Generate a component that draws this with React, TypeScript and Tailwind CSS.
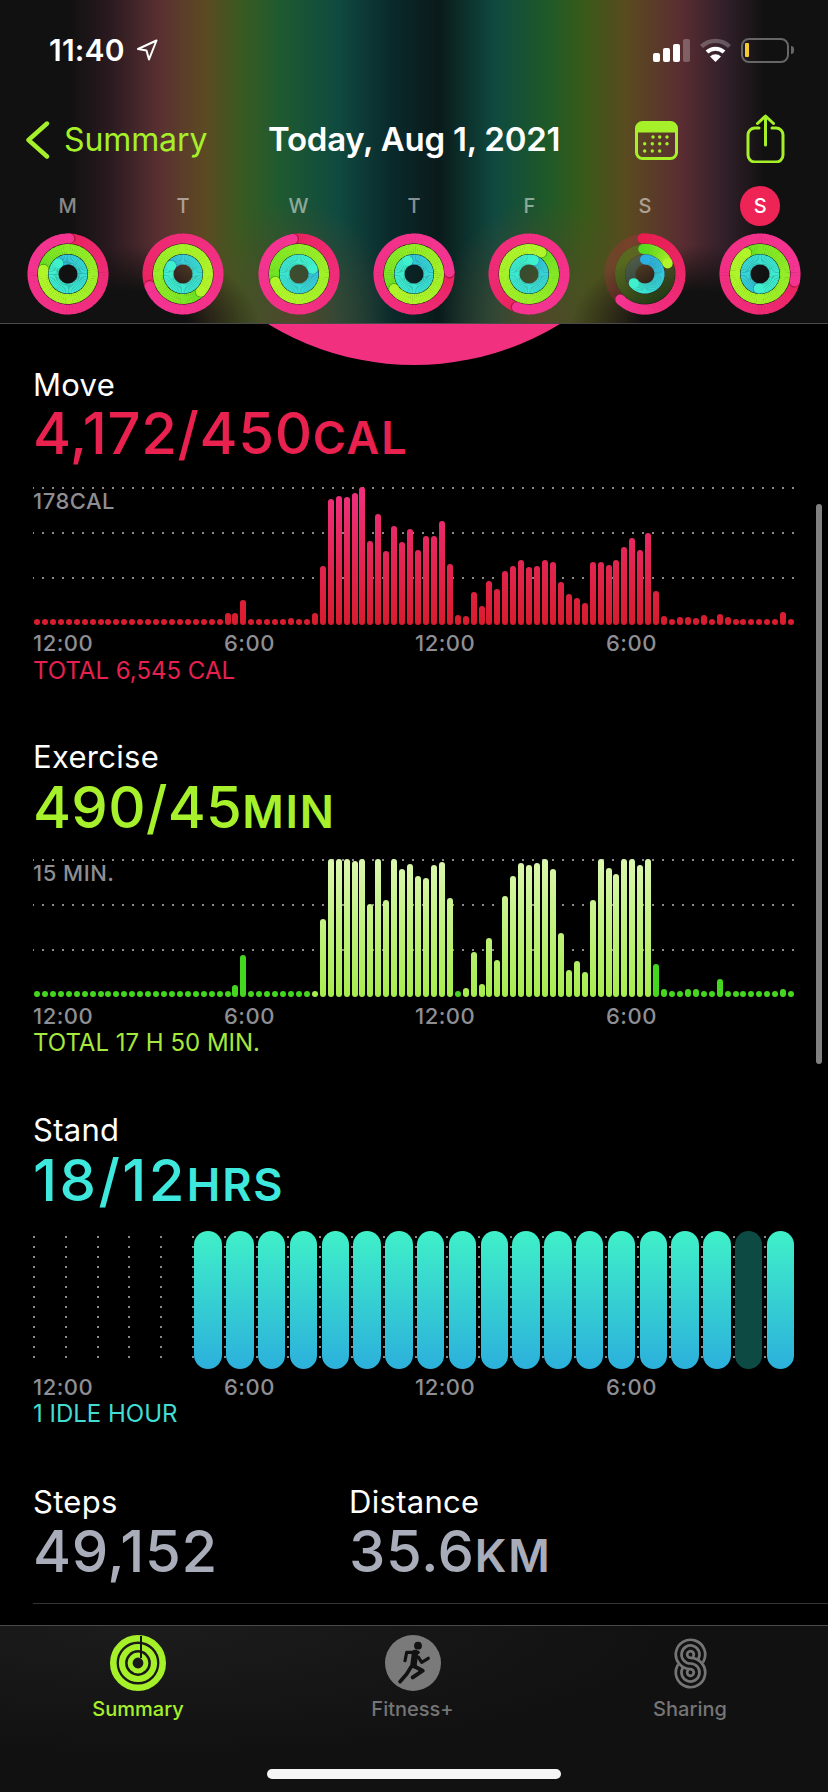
import React from 'react';

const rep = (n: number, v = 6) => Array<number>(n).fill(v);

// chart heights in px, one per 15 minutes
const moveBars = [
  ...rep(24), 12, 12, 25, ...rep(5), 7, 6, 6, 12, 59, 126, 129, 128, 132, 138, 84, 111, 74, 99, 83, 96, 75, 89, 89, 104,
  61, 10, 9, 33, 19, 44, 36, 54, 59, 65, 58, 59, 65, 63, 43, 31, 27, 22, 63, 63, 60, 65, 78, 87, 75, 92, 34, 9, 6, 8, 8,
  7, 10, 6, 11, 8, ...rep(6), 13, 6,
];

const exerciseBars = [
  ...rep(25), 12, 42, ...rep(9), 78, 138, 138, 138, 136, 138, 93, 138, 97, 138, 128, 133, 121, 119, 132, 135, 99, 6, 9,
  45, 13, 59, 37, 101, 121, 134, 132, 134, 138, 128, 64, 27, 36, 25, 97, 138, 129, 123, 138, 138, 132, 138, 33, 8, 6, 6,
  8, 8, 6, 6, 18, ...rep(7), 8, 6,
];

const polar = (c: number, r: number, deg: number): [number, number] => {
  const a = ((deg - 90) * Math.PI) / 180;
  return [c + r * Math.cos(a), c + r * Math.sin(a)];
};

const mix = (a: number[], b: number[], t: number) =>
  `rgb(${a.map((v, i) => Math.round(v + (b[i] - v) * t)).join(',')})`;

const PINK = { from: [232, 30, 80], to: [245, 52, 146] };
const GREEN = { from: [84, 220, 32], to: [176, 245, 42] };
const BLUE = { from: [43, 176, 228], to: [63, 240, 207] };

const CENTER = 41;

// one ring: gradient runs clockwise up to the head. start omitted = ring is closed
const RingArc: React.FC<{ r: number; w: number; col: { from: number[]; to: number[] }; head: number; start?: number }> = ({
  r,
  w,
  col,
  head,
  start,
}) => {
  const closed = start === undefined;
  const from = closed ? head : start!;
  const sweep = closed ? 360 : ((head - from + 360) % 360);
  const steps = 72;
  const segs = [];
  for (let k = 0; k < steps; k++) {
    const a0 = from + (sweep * k) / steps;
    const a1 = from + (sweep * (k + 1)) / steps + 0.8;
    const [x0, y0] = polar(CENTER, r, a0);
    const [x1, y1] = polar(CENTER, r, a1);
    const t = closed ? Math.min(1, Math.pow(k / steps, 0.4) * 1.05) : k / steps;
    segs.push(
      <path key={k} d={`M${x0} ${y0}A${r} ${r} 0 0 1 ${x1} ${y1}`} fill="none" stroke={mix(col.from, col.to, t)} strokeWidth={w} />,
    );
  }
  const [hx, hy] = polar(CENTER, r, head);
  const [sx, sy] = closed ? [0, 0] : polar(CENTER, r, start!);
  const [shx, shy] = polar(CENTER, r, head + 2);
  return (
    <g>
      {!closed && <circle cx={CENTER} cy={CENTER} r={r} fill="none" stroke={mix(col.from, col.to, 0.1)} strokeOpacity={0.2} strokeWidth={w} />}
      {!closed && <circle cx={sx} cy={sy} r={w / 2} fill={mix(col.from, col.to, 0)} />}
      {segs}
      {closed && <circle cx={shx} cy={shy} r={w / 2} fill="#000" fillOpacity={0.28} />}
      <circle cx={hx} cy={hy} r={w / 2} fill={mix(col.from, col.to, 1)} />
    </g>
  );
};

interface DayRing {
  label: string;
  pink: number;
  green: number;
  blue: number;
  partial?: boolean;
  today?: boolean;
}

const days: DayRing[] = [
  { label: 'M', pink: 2, green: 280, blue: 318 },
  { label: 'T', pink: 250, green: 135, blue: 305 },
  { label: 'W', pink: 350, green: 252, blue: 70 },
  { label: 'T', pink: 87, green: 233, blue: 335 },
  { label: 'F', pink: 200, green: 30, blue: 20 },
  { label: 'S', pink: 224, green: 65, blue: 231, partial: true },
  { label: 'S', pink: 102, green: 327, blue: 185, today: true },
];

const Rings: React.FC<{ d: DayRing }> = ({ d }) => (
  <svg width="82" height="82" viewBox="0 0 82 82">
    {!d.partial && (
      <>
        <circle cx={CENTER} cy={CENTER} r={30.2} fill="none" stroke="#0c0c0c" strokeOpacity={0.85} strokeWidth={1.2} />
        <circle cx={CENTER} cy={CENTER} r={19.7} fill="none" stroke="#0c0c0c" strokeOpacity={0.85} strokeWidth={1.2} />
      </>
    )}
    <RingArc r={35.5} w={10} col={PINK} head={d.pink} start={d.partial ? 356 : undefined} />
    <RingArc r={25} w={10} col={GREEN} head={d.green} start={d.partial ? 356 : undefined} />
    <RingArc r={14.5} w={10} col={BLUE} head={d.blue} start={d.partial ? 0 : undefined} />
  </svg>
);

const StatusBar = () => (
  <div className="flex h-[40px] mt-[30px] items-center justify-between pl-[49px] pr-[34px]">
    <div className="flex items-center">
      <span className="w-[87px] text-[30px] font-semibold text-white tracking-[0.2px]">11:40</span>
      <svg width="22" height="22" viewBox="0 0 22 22" fill="none">
        <path d="M20.5 1.5 2 10l8.5 1.5L13 20.5z" stroke="#fff" strokeWidth="2" strokeLinejoin="round" />
      </svg>
    </div>
    <div className="flex items-center">
      <svg width="37" height="23" viewBox="0 0 37 23" className="mr-[9px]">
        <rect x="0" y="14" width="7" height="9" rx="2" fill="#fff" />
        <rect x="10" y="9" width="7" height="14" rx="2" fill="#fff" />
        <rect x="20" y="5" width="7" height="18" rx="2" fill="#fff" />
        <rect x="30" y="0" width="7" height="23" rx="2" fill="#fff" fillOpacity="0.25" />
      </svg>
      <svg width="33" height="24" viewBox="0 0 33 24" fill="none" className="mr-[9px]">
        <path d="M2.5 8.5a20 20 0 0 1 28 0" stroke="#fff" strokeOpacity="0.25" strokeWidth="4.2" />
        <path d="M8 14a12.5 12.5 0 0 1 17 0" stroke="#fff" strokeWidth="4" />
        <path d="M16.5 24 11 18.4a8 8 0 0 1 11 0z" fill="#fff" />
      </svg>
      <div className="flex h-[25px] w-[48px] items-center rounded-[8px] border-2 border-[#666] pl-[2px]">
        <div className="h-[14px] w-[4px] rounded-[1px] bg-[#f5c932]" />
      </div>
      <div className="ml-[2px] h-[8px] w-[3px] rounded-r-full bg-[#666]" />
    </div>
  </div>
);

const NavBar = () => (
  <div className="flex h-[50px] mt-[45px] items-center pl-[25px]">
    <div className="flex w-[243px] items-center">
      <svg width="25" height="38" viewBox="0 0 25 38" fill="none">
        <path d="M22 2.5 3.5 19 22 35.5" stroke="#a6f02a" strokeWidth="4.4" strokeLinecap="round" strokeLinejoin="round" />
      </svg>
      <span className="ml-[14px] text-[#a6f02a] text-[32px] tracking-[-0.1px]">Summary</span>
    </div>
    <div className="w-[367px] text-[33px] font-semibold text-white tracking-[-0.25px]">Today, Aug 1, 2021</div>
    <div className="w-[111px]">
      <svg width="43" height="39" viewBox="0 0 43 39">
        <rect x="1.5" y="1.5" width="40" height="36" rx="6" fill="none" stroke="#a6f02a" strokeWidth="3" />
        <path d="M1.5 11V7.5a6 6 0 0 1 6-6h28a6 6 0 0 1 6 6V11z" fill="#a6f02a" stroke="#a6f02a" strokeWidth="1" />
        {[
          [18, 16],
          [24.7, 16],
          [32, 16],
          [9.7, 22.7],
          [17.3, 22.7],
          [24.7, 22.7],
          [32, 22.7],
          [9.7, 30],
          [17.3, 30],
          [24.7, 30],
        ].map(([x, y]) => (
          <circle key={`${x}-${y}`} cx={x} cy={y} r="1.7" fill="#a6f02a" />
        ))}
      </svg>
    </div>
    <svg width="41" height="50" viewBox="0 0 41 50" fill="none" className="-mt-[4px]">
      <path
        d="M13 15H9a7 7 0 0 0-7 7v20a7 7 0 0 0 7 7h21a7 7 0 0 0 7-7V22a7 7 0 0 0-7-7h-4"
        stroke="#a6f02a"
        strokeWidth="3"
        strokeLinecap="round"
      />
      <path d="M19.5 3v29M11.5 10.5 19.5 3l8 7.5" stroke="#a6f02a" strokeWidth="3" strokeLinecap="round" strokeLinejoin="round" />
    </svg>
  </div>
);

const Header = () => (
  <header className="relative z-10 h-[324px] shrink-0 border-b border-[#4a4a4a] bg-[radial-gradient(ellipse_130px_85px_at_130px_330px,#111_45%,transparent),radial-gradient(ellipse_130px_85px_at_700px_330px,#111_45%,transparent),radial-gradient(ellipse_100px_120px_at_295px_320px,#5f4428d0,transparent),radial-gradient(ellipse_100px_120px_at_540px_320px,#5f4428d0,transparent),linear-gradient(90deg,#111_70px,#2a1a20_110px,#5a3032_160px,#5c4a22_205px,#3a5a20_240px,#1f5a30_280px,#0f4a40_338px,#0a2a2c_390px,#0a1a1a_438px,#0f4a40_496px,#1f5a28_549px,#3a5a18_585px,#5a4a20_628px,#5a2d32_681px,#33202a_723px,#111_765px)]">
    <StatusBar />
    <NavBar />
    <div className="mt-[21px] grid grid-cols-7 px-[10px]">
      {days.map((d, i) => (
        <div key={i} className="flex flex-col items-center">
          <div
            className={
              d.today
                ? 'flex h-[40px] w-[40px] items-center justify-center rounded-full bg-[#ee2457] text-[20px] font-medium text-white'
                : 'flex h-[40px] w-[40px] items-center justify-center text-[20px] font-medium text-white/50'
            }
          >
            {d.label}
          </div>
          <div className="mt-[7px] h-[82px]">
            <Rings d={d} />
          </div>
        </div>
      ))}
    </div>
  </header>
);

const Dotted: React.FC<{ className: string }> = ({ className }) => (
  <div
    className={`absolute left-0 h-[2px] w-[762px] bg-[radial-gradient(circle,#8a8a8a_1px,transparent_1.1px)] bg-[length:10px_2px] bg-[position:-5px_0] ${className}`}
  />
);

const BarChart: React.FC<{ bars: number[]; label: string; barClass: (i: number) => string }> = ({ bars, label, barClass }) => (
  <div className="relative ml-[33px] h-[138px] w-[762px]">
    <Dotted className="top-0" />
    <Dotted className="top-[45px]" />
    <Dotted className="top-[90px]" />
    <div className="absolute left-0 top-[1px] text-[22px] leading-[26px] font-medium tracking-[0.5px] text-[#8e8e93]">{label}</div>
    <div className="relative flex h-full items-end justify-between pl-[1px]">
      {bars.map((h, i) => (
        <div key={i} className={`w-[6px] rounded-full ${barClass(i)}`} style={{ height: h }} />
      ))}
    </div>
  </div>
);

const TimeAxis: React.FC = () => (
  <div className="ml-[33px] flex h-[26px] items-center text-[22px] font-medium tracking-[0.5px] text-[#8e8e93]">
    <span className="w-[191px]">12:00</span>
    <span className="w-[191px]">6:00</span>
    <span className="w-[191px]">12:00</span>
    <span className="w-[191px]">6:00</span>
  </div>
);

const Heading: React.FC<{ title: string; value: string; unit: string; valueClass: string }> = ({ title, value, unit, valueClass }) => (
  <div>
    <div className="h-[36px] text-[31px] leading-[36px] tracking-[0.3px] text-white">{title}</div>
    <div className={`h-[60px] text-[58px] font-medium leading-[60px] ${valueClass}`}>
      {value}
      <span className="text-[45px] font-semibold tracking-[1.8px]">{unit}</span>
    </div>
  </div>
);

const moveBar = () => 'bg-[linear-gradient(to_top,#d81c2c,#f03080)] bg-[length:100%_138px] bg-bottom';
const exerciseBar = (i: number) =>
  i >= 35 && i <= 77 && i !== 53
    ? 'bg-[linear-gradient(to_top,#a6ec4e,#dcf7ae)] bg-[length:100%_138px] bg-bottom'
    : 'bg-[#45d61f]';

const StandChart = () => (
  <div className="ml-[33px] flex h-[138px]">
    {Array.from({ length: 24 }, (_, k) => (
      <div key={k} className="flex h-full w-[31.8px] shrink-0">
        <div className="mt-[1px] h-[132px] w-[2px] shrink-0 bg-[radial-gradient(circle,#8a8a8a_1px,transparent_1.1px)] bg-[length:2px_10px]" />
        {k >= 5 && (
          <div
            className={
              k === 22
                ? 'ml-[0.4px] h-full w-[27.4px] rounded-full bg-[#0e4a44]'
                : 'ml-[0.4px] h-full w-[27.4px] rounded-full bg-[linear-gradient(to_bottom,#3ff0c8,#2cb0dc)]'
            }
          />
        )}
      </div>
    ))}
  </div>
);

const SummaryIcon = () => (
  <svg width="56" height="56" viewBox="0 0 56 56" fill="none">
    <circle cx="28" cy="28" r="24.7" stroke="#a6f02a" strokeWidth="6.6" />
    <circle cx="28" cy="28" r="16" stroke="#a6f02a" strokeWidth="6.2" />
    <circle cx="28" cy="28" r="7.9" stroke="#a6f02a" strokeWidth="5" />
    <path d="M31 1v22" stroke="#121212" strokeWidth="2" />
  </svg>
);

const FitnessIcon = () => (
  <div className="h-[56px] w-[56px] rounded-full bg-[#7a7a7a]">
    <svg width="56" height="56" viewBox="0 0 56 56" fill="none" stroke="#121212" strokeLinecap="round" strokeLinejoin="round">
      <circle cx="33" cy="10.7" r="3.9" fill="#121212" stroke="none" />
      <path d="M20 25.7 21.7 17.3H33.3" strokeWidth="3.2" />
      <path d="M30 18 28.5 30" strokeWidth="6.4" />
      <path d="M33.5 22.3 36.7 27.3 43.3 23.3" strokeWidth="3.2" />
      <path d="M28.3 30.7 37.7 35.7 27.7 42.3" strokeWidth="4" />
      <path d="M26 32 21.7 39 15 46.7" strokeWidth="3.6" />
    </svg>
  </div>
);

// three parallel S curves, top and bottom radii add up to the distance of the two centres
const sharingCurve = (rt: number, rb: number) => {
  const cx = 16.5;
  const [sx, sy] = [cx + rt * Math.cos(0.5), 16.5 + rt * Math.sin(0.5)];
  const [ex, ey] = [cx - rb * Math.cos(0.5), 34.5 - rb * Math.sin(0.5)];
  return `M${sx} ${sy}A${rt} ${rt} 0 1 0 ${cx} ${16.5 + rt}A${rb} ${rb} 0 1 1 ${ex} ${ey}`;
};

const SharingIcon = () => (
  <svg width="33" height="51" viewBox="0 0 33 51" fill="none" stroke="#757575" strokeWidth="2.7" strokeLinecap="round">
    <path d={sharingCurve(14.7, 3.3)} />
    <path d={sharingCurve(9, 9)} />
    <path d={sharingCurve(3.3, 14.7)} />
  </svg>
);

const TabBar = () => (
  <nav className="flex-1 border-t border-[#4a4a4a] bg-[radial-gradient(ellipse_at_18%_0%,#1c1c1c,#111_55%)]">
    <div className="grid grid-cols-3">
      <div className="flex flex-col items-center">
        <div className="mt-[9px] flex h-[56px] items-center">
          <SummaryIcon />
        </div>
        <span className="mt-[5px] text-[20px] leading-[26px] font-medium text-[#a6f02a]">Summary</span>
      </div>
      <div className="flex flex-col items-center pr-[3px]">
        <div className="mt-[9px] flex h-[56px] items-center">
          <FitnessIcon />
        </div>
        <span className="mt-[5px] text-[20px] leading-[26px] font-medium text-[#757575]">Fitness+</span>
      </div>
      <div className="flex flex-col items-center">
        <div className="mt-[9px] flex h-[56px] items-center">
          <SharingIcon />
        </div>
        <span className="mt-[5px] text-[20px] leading-[26px] font-medium text-[#757575]">Sharing</span>
      </div>
    </div>
    <div className="mx-auto mt-[47px] h-[10px] w-[294px] rounded-full bg-[#f5f5f5]" />
  </nav>
);

export default function App() {
  return (
    <div className="relative flex h-[1792px] w-[828px] flex-col overflow-hidden bg-black font-[Inter,sans-serif]">
      <Header />
      <main className="relative h-[1301px] shrink-0 overflow-hidden">
        {/* blown up move ring peeking out under the header */}
        <div className="absolute left-[134px] top-[-519px] h-[560px] w-[560px] rounded-full bg-[#f13180]" />

        <section className="relative mt-[43px]">
          <div className="pl-[33px]">
            <Heading title="Move" value="4,172/450" unit="CAL" valueClass="tracking-[0.6px] text-[#e8214f]" />
          </div>
          <div className="mt-[24px]">
            <BarChart bars={moveBars} label="178CAL" barClass={moveBar} />
          </div>
          <div className="mt-[5px]">
            <TimeAxis />
          </div>
          <div className="ml-[33px] mt-[2px] text-[24px] leading-[26px] text-[#e6204f]">TOTAL 6,545 CAL</div>
        </section>

        <section className="relative mt-[55px]">
          <div className="pl-[33px]">
            <Heading title="Exercise" value="490/45" unit="MIN" valueClass="mt-[2px] tracking-[0.3px] text-[#a6f02c]" />
          </div>
          <div className="mt-[22px]">
            <BarChart bars={exerciseBars} label="15 MIN." barClass={exerciseBar} />
          </div>
          <div className="mt-[6px]">
            <TimeAxis />
          </div>
          <div className="ml-[33px] mt-[1px] text-[24px] leading-[26px] text-[#a6e83c]">TOTAL 17 H 50 MIN.</div>
        </section>

        <section className="relative mt-[56px]">
          <div className="pl-[33px]">
            <Heading title="Stand" value="18/12" unit="HRS" valueClass="mt-[2px] tracking-[2.4px] text-[#3ee8dc]" />
          </div>
          <div className="mt-[21px]">
            <StandChart />
          </div>
          <div className="mt-[5px]">
            <TimeAxis />
          </div>
          <div className="ml-[33px] mt-[1px] text-[24px] leading-[26px] text-[#44dcd0]">1 IDLE HOUR</div>
        </section>

        <section className="relative mt-[57px] flex border-b border-[#333] ml-[33px] h-[120px]">
          <div className="w-[316px]">
            <Heading title="Steps" value="49,152" unit="" valueClass="mt-[1px] tracking-[0.6px] text-[#a9adb9]" />
          </div>
          <div>
            <Heading title="Distance" value="35.6" unit="KM" valueClass="mt-[1px] tracking-[0.6px] text-[#a9adb9]" />
          </div>
        </section>

        <div className="absolute left-[816px] top-[180px] h-[560px] w-[6px] rounded-full bg-[#808080]" />
      </main>
      <TabBar />
    </div>
  );
}
